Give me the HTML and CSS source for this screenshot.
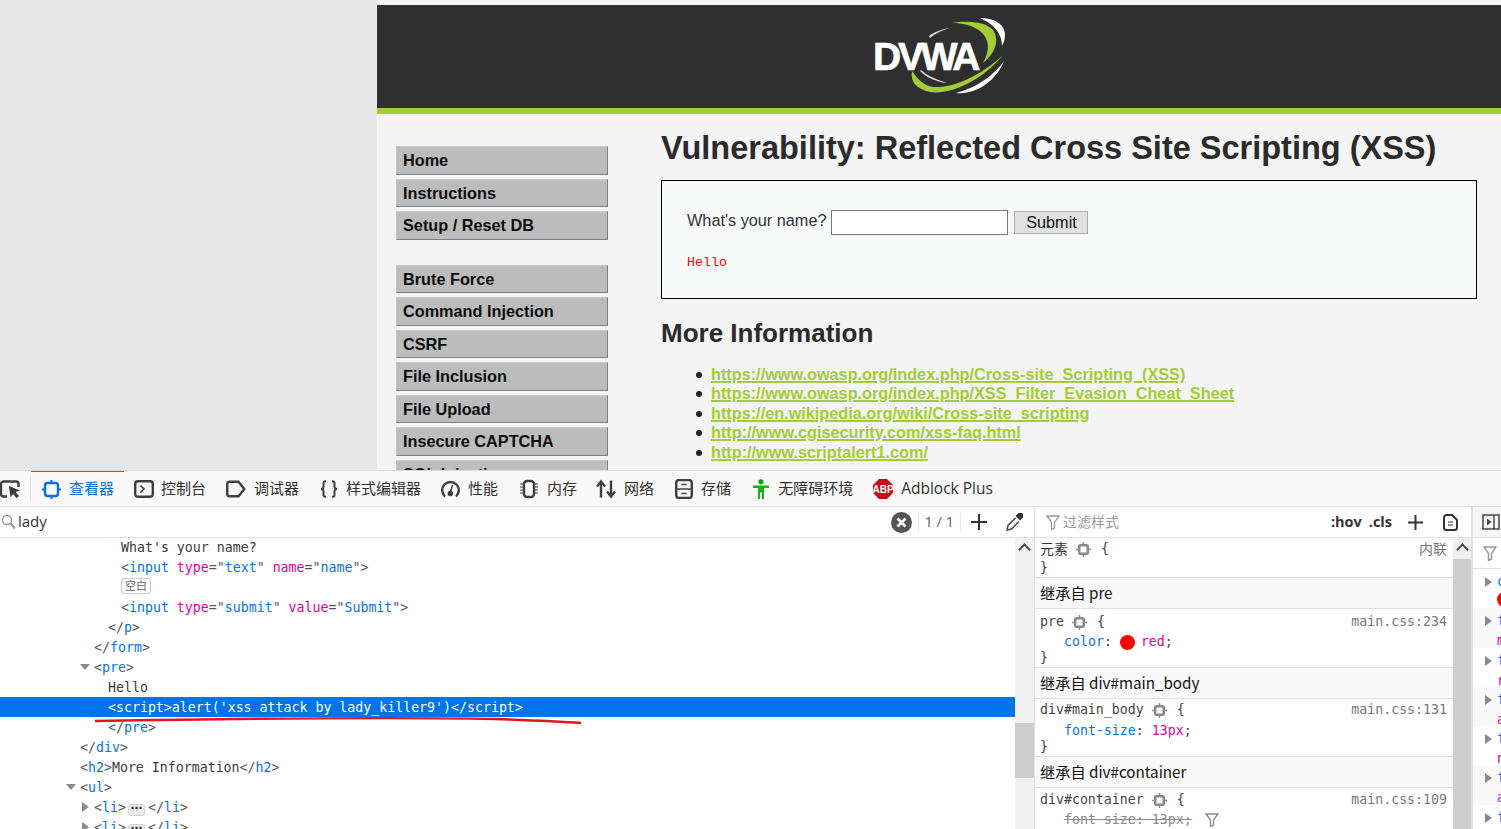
FILE: index.html
```html
<!DOCTYPE html>
<html lang="zh-CN">
<head>
<meta charset="utf-8">
<title>DVWA Reflected XSS</title>
<link rel="stylesheet" href="styles.css">
</head>
<body>
<div class="viewport">
  <div class="gutter"></div>
  <div class="site">
    <div class="header">
      <svg class="logo" viewBox="0 0 140 80" width="140" height="80">
        <path d="M82 8 C96 5 116 7 122 14 C129 22 128 36 113 48 C120 36 120 24 110 16 C102 10 92 8 82 8Z" fill="#a2cd34"/>
        <path d="M110 3 C124 3 135 9 135 20 C135 24 134 27 132 31 C132 20 126 10 110 3Z" fill="#fff"/>
        <path d="M42 56 C40 66 46 74 60 77 C80 80 112 66 133 40 C116 56 92 70 70 72 C58 73 50 68 42 56Z" fill="#a2cd34"/>
        <path d="M86 78 C106 80 126 66 134 46 C124 60 108 72 86 78Z" fill="#fff"/>
        <path d="M60 23 C66 18 72 15 80 13 C72 14 64 17 59 21Z" fill="#ddd"/>
        <path d="M50 56 C56 62 66 67 77 68 C66 64 57 61 51 55Z" fill="#ddd"/>
        <text x="3" y="55" class="logo-text">DVWA</text>
      </svg>
    </div>
    <div class="green-bar"></div>
    <div class="site-body">
      <nav class="menu">
        <div class="menu-group">
          <a class="menu-item">Home</a>
          <a class="menu-item">Instructions</a>
          <a class="menu-item">Setup / Reset DB</a>
        </div>
        <div class="menu-group">
          <a class="menu-item">Brute Force</a>
          <a class="menu-item">Command Injection</a>
          <a class="menu-item">CSRF</a>
          <a class="menu-item">File Inclusion</a>
          <a class="menu-item">File Upload</a>
          <a class="menu-item">Insecure CAPTCHA</a>
          <a class="menu-item">SQL Injection</a>
        </div>
      </nav>
      <main class="content">
        <h1 class="title">Vulnerability: Reflected Cross Site Scripting (XSS)</h1>
        <div class="vuln-box">
          <div class="form-row">
            <span class="prompt">What's your name?</span>
            <span class="text-input"></span>
            <span class="submit">Submit</span>
          </div>
          <pre class="hello">Hello</pre>
        </div>
        <h2 class="subtitle">More Information</h2>
        <ul class="links">
          <li><a>https://www.owasp.org/index.php/Cross-site_Scripting_(XSS)</a></li>
          <li><a>https://www.owasp.org/index.php/XSS_Filter_Evasion_Cheat_Sheet</a></li>
          <li><a>https://en.wikipedia.org/wiki/Cross-site_scripting</a></li>
          <li><a>http://www.cgisecurity.com/xss-faq.html</a></li>
          <li><a>http://www.scriptalert1.com/</a></li>
        </ul>
      </main>
    </div>
  </div>
</div>

<div class="devtools">
  <div class="tabs">
    <span class="pick">
      <svg width="22" height="20" viewBox="0 0 22 20"><path d="M7 17.500H3.500A2.500 2.500 0 0 1 1 15V5a2.500 2.500 0 0 1 2.500-2.500H16A2.500 2.500 0 0 1 18.500 5v3" class="ic"/><path d="M9 7l11 4.500-4.500 1.500 3.500 4-2.500 2-3.500-4-2.500 3.500z" fill="#3b3b3b"/></svg>
    </span>
    <span class="tab active">
      <svg width="19" height="19" viewBox="0 0 19 19"><rect x="3" y="3" width="13" height="13" rx="2.500" fill="none" stroke="#0b6fe0" stroke-width="2.400"/><path d="M9.500 0v3M9.500 16v3M0 9.500h3M16 9.500h3" stroke="#0b6fe0" stroke-width="2"/></svg>
      <span class="tab-label">查看器</span>
    </span>
    <span class="tab tight">
      <svg width="20" height="18" viewBox="0 0 20 18"><rect x="1.200" y="1.200" width="17.600" height="15.600" rx="2.800" class="ic"/><path d="M6.500 5.500L10 9l-3.500 3.500" class="ic-thin"/></svg>
      <span class="tab-label">控制台</span>
    </span>
    <span class="tab wide">
      <svg width="20" height="18" viewBox="0 0 20 18"><path d="M3.500 1.800h9L18.300 9l-5.800 7.200h-9A2.300 2.300 0 0 1 1.200 14V4a2.300 2.300 0 0 1 2.300-2.200z" class="ic"/></svg>
      <span class="tab-label">调试器</span>
    </span>
    <span class="tab">
      <svg width="18" height="18" viewBox="0 0 18 18"><path d="M6 1.200C3 1.200 3.500 3 3.500 5v1.500C3.500 8 2.500 9 1 9c1.500 0 2.500 1 2.500 2.500V13c0 2-.5 3.800 2.500 3.800M12 1.200c3 0 2.500 1.800 2.500 3.800v1.500C14.500 8 15.500 9 17 9c-1.500 0-2.500 1-2.500 2.500V13c0 2 .5 3.800-2.500 3.800" class="ic-mid"/></svg>
      <span class="tab-label">样式编辑器</span>
    </span>
    <span class="tab wide">
      <svg width="19" height="18" viewBox="0 0 19 18"><path d="M4 16.500A8.300 8.300 0 1 1 15 16.500" class="ic"/><path d="M11.500 5L9.500 12" class="ic-thin"/><circle cx="9.300" cy="13.500" r="2.700" fill="#3b3b3b"/></svg>
      <span class="tab-label">性能</span>
    </span>
    <span class="tab narrow">
      <svg width="20" height="20" viewBox="0 0 20 20"><rect x="5" y="2" width="10" height="16" rx="3" class="ic"/><path d="M1 5h3M1 8h3M1 11h3M1 14h3M16 5h3M16 8h3M16 11h3M16 14h3" stroke="#3b3b3b" stroke-width="1.200"/></svg>
      <span class="tab-label">内存</span>
    </span>
    <span class="tab wide">
      <svg width="20" height="20" viewBox="0 0 20 20"><path d="M5 18.500V3M1 7.500L5 2.500l4 5M15 1.500V17M11 12.500l4 5 4-5" class="ic"/></svg>
      <span class="tab-label">网络</span>
    </span>
    <span class="tab wide">
      <svg width="18" height="20" viewBox="0 0 18 20"><rect x="1.200" y="1" width="15.600" height="18" rx="2.800" class="ic"/><path d="M1.500 10h15M6.500 5.500h5M6.500 14.500h5" class="ic-thin"/></svg>
      <span class="tab-label">存储</span>
    </span>
    <span class="tab">
      <svg width="18" height="20" viewBox="0 0 18 20"><circle cx="9" cy="2.800" r="2.600" fill="#12a012"/><path d="M1 6.500h16v2.500h-5v11h-2v-6.500H8V20H6V9H1z" fill="#12b312"/></svg>
      <span class="tab-label">无障碍环境</span>
    </span>
    <span class="tab abp">
      <svg width="20" height="20" viewBox="0 0 20 20"><path d="M6 0h8l6 6v8l-6 6H6l-6-6V6z" fill="#c70d0d"/><text x="10" y="13.800" class="abp-text">ABP</text></svg>
      <span class="abp-label">Adblock Plus</span>
    </span>
  </div>

  <div class="panes">
    <div class="inspector">
      <div class="search-bar">
        <svg width="15" height="16" viewBox="0 0 15 16"><circle cx="6" cy="6" r="4.500" fill="none" stroke="#9a9a9a" stroke-width="1.500"/><path d="M9.500 9.500L14 14.500" stroke="#9a9a9a" stroke-width="2"/></svg>
        <span class="search-text">lady</span>
        <span class="search-spacer"></span>
        <svg width="21" height="21" viewBox="0 0 21 21"><circle cx="10.500" cy="10.500" r="10.500" fill="#555"/><path d="M6.500 6.500l8 8M14.500 6.500l-8 8" stroke="#fff" stroke-width="2.600"/></svg>
        <span class="count">1 / 1</span>
        <svg class="plus" width="16" height="16" viewBox="0 0 16 16"><path d="M8 0v16M0 8h16" stroke="#333" stroke-width="2"/></svg>
        <svg class="dropper" width="17" height="18" viewBox="0 0 17 18"><path d="M12 0.500a2.500 2.500 0 0 1 4.500 4.500L14 7.500 9.500 3z" fill="#333"/><path d="M9.500 5L2 12.500 1 17l4.500-1L13 8.500" fill="none" stroke="#444" stroke-width="1.500"/></svg>
      </div>
      <div class="markup-wrap">
        <div class="markup">
          <div class="line i3 first"><span class="tx">What's your name?</span></div>
          <div class="line i3"><span class="pn">&lt;</span><span class="tg">input</span> <span class="at">type</span><span class="pn">="</span><span class="tg">text</span><span class="pn">"</span> <span class="at">name</span><span class="pn">="</span><span class="tg">name</span><span class="pn">"&gt;</span></div>
          <div class="line i3"><span class="empty">空白</span></div>
          <div class="line i3"><span class="pn">&lt;</span><span class="tg">input</span> <span class="at">type</span><span class="pn">="</span><span class="tg">submit</span><span class="pn">"</span> <span class="at">value</span><span class="pn">="</span><span class="tg">Submit</span><span class="pn">"&gt;</span></div>
          <div class="line i2b"><span class="pn">&lt;/</span><span class="tg">p</span><span class="pn">&gt;</span></div>
          <div class="line i2"><span class="pn">&lt;/</span><span class="tg">form</span><span class="pn">&gt;</span></div>
          <div class="line i2"><i class="tw open"></i><span class="pn">&lt;</span><span class="tg">pre</span><span class="pn">&gt;</span></div>
          <div class="line i2b"><span class="tx">Hello</span></div>
          <div class="line i2b selected">&lt;script&gt;alert('xss attack by lady_killer9')&lt;/script&gt;</div>
          <div class="line i2b"><span class="pn">&lt;/</span><span class="tg">pre</span><span class="pn">&gt;</span></div>
          <div class="line i1"><span class="pn">&lt;/</span><span class="tg">div</span><span class="pn">&gt;</span></div>
          <div class="line i1"><span class="pn">&lt;</span><span class="tg">h2</span><span class="pn">&gt;</span><span class="tx">More Information</span><span class="pn">&lt;/</span><span class="tg">h2</span><span class="pn">&gt;</span></div>
          <div class="line i1"><i class="tw open"></i><span class="pn">&lt;</span><span class="tg">ul</span><span class="pn">&gt;</span></div>
          <div class="line i2"><i class="tw shut"></i><span class="pn">&lt;</span><span class="tg">li</span><span class="pn">&gt;</span><span class="dots">⋯</span><span class="pn">&lt;/</span><span class="tg">li</span><span class="pn">&gt;</span></div>
          <div class="line i2"><i class="tw shut"></i><span class="pn">&lt;</span><span class="tg">li</span><span class="pn">&gt;</span><span class="dots">⋯</span><span class="pn">&lt;/</span><span class="tg">li</span><span class="pn">&gt;</span></div>
          <svg class="scribble" width="490" height="10" viewBox="0 0 490 10"><path d="M0 6C120 4 300 2 400 4 430 5 460 6 486 8" fill="none" stroke="#e8121f" stroke-width="2.400"/></svg>
        </div>
        <div class="scrollbar sb-markup"><span class="sb-up"></span><span class="sb-thumb"></span></div>
      </div>
    </div>

    <div class="rules">
      <div class="rules-bar">
        <svg width="14" height="15" viewBox="0 0 14 15"><path d="M1 1h12L8.500 7.500V13L5.500 14.500v-7z" fill="none" stroke="#999" stroke-width="1.300"/></svg>
        <span class="filter-text">过滤样式</span>
        <span class="search-spacer"></span>
        <b class="pill">:hov</b>
        <b class="pill">.cls</b>
        <svg class="add-rule" width="15" height="15" viewBox="0 0 15 15"><path d="M7.500 0v15M0 7.500h15" stroke="#333" stroke-width="2"/></svg>
        <svg width="15" height="17" viewBox="0 0 15 17"><path d="M3.500 1H9l5 5v7.500a2.500 2.500 0 0 1-2.500 2.500h-8A2.500 2.500 0 0 1 1 13.500v-10A2.500 2.500 0 0 1 3.500 1z" fill="none" stroke="#333" stroke-width="2"/><path d="M5 8h5M5 11h5" stroke="#333" stroke-width="1.200"/></svg>
      </div>
      <div class="rules-wrap">
        <div class="rules-list">
          <div class="rule rule-el">
            <div class="r-line"><span class="sel-cn">元素</span><svg class="target" viewBox="0 0 15 15" width="15" height="15"><rect x="3.200" y="3.200" width="8.600" height="8.600" rx="1.500" class="tg-box"/><path d="M7.500 0v2.500M7.500 12.500V15M0 7.500h2.500M12.500 7.500H15" class="tg-tick"/></svg><span class="br">{</span><span class="src cn">内联</span></div>
            <div class="r-line r-last"><span class="br">}</span></div>
          </div>
          <div class="inherit">继承自 pre</div>
          <div class="rule rule-pre">
            <div class="r-line r-down"><span class="sel">pre</span><svg class="target" viewBox="0 0 15 15" width="15" height="15"><rect x="3.200" y="3.200" width="8.600" height="8.600" rx="1.500" class="tg-box"/><path d="M7.500 0v2.500M7.500 12.500V15M0 7.500h2.500M12.500 7.500H15" class="tg-tick"/></svg><span class="br">{</span><span class="src">main.css:234</span></div>
            <div class="r-line decl"><span class="pr">color</span><span class="colon">:</span><i class="swatch"></i><span class="vl">red</span><span>;</span></div>
            <div class="r-line r-close"><span class="br">}</span></div>
          </div>
          <div class="inherit">继承自 div#main_body</div>
          <div class="rule">
            <div class="r-line"><span class="sel">div#main_body</span><svg class="target" viewBox="0 0 15 15" width="15" height="15"><rect x="3.200" y="3.200" width="8.600" height="8.600" rx="1.500" class="tg-box"/><path d="M7.500 0v2.500M7.500 12.500V15M0 7.500h2.500M12.500 7.500H15" class="tg-tick"/></svg><span class="br">{</span><span class="src">main.css:131</span></div>
            <div class="r-line decl"><span class="pr">font-size</span><span class="colon sp">:</span><span class="vl">13px</span><span>;</span></div>
            <div class="r-line r-close"><span class="br">}</span></div>
          </div>
          <div class="inherit">继承自 div#container</div>
          <div class="rule">
            <div class="r-line r-down"><span class="sel">div#container</span><svg class="target" viewBox="0 0 15 15" width="15" height="15"><rect x="3.200" y="3.200" width="8.600" height="8.600" rx="1.500" class="tg-box"/><path d="M7.500 0v2.500M7.500 12.500V15M0 7.500h2.500M12.500 7.500H15" class="tg-tick"/></svg><span class="br">{</span><span class="src">main.css:109</span></div>
            <div class="r-line decl"><span class="struck">font-size: 13px;</span><svg class="ov-filter" width="14" height="14" viewBox="0 0 14 14"><path d="M1 1h12L8.500 7v5L5.500 13.500V7z" fill="none" stroke="#8a8a8a" stroke-width="1.300"/></svg></div>
          </div>
        </div>
        <div class="scrollbar sb-rules"><span class="sb-up"></span><span class="sb-fill"></span></div>
      </div>
    </div>

    <div class="side">
      <div class="side-top">
        <svg width="18" height="16" viewBox="0 0 18 16"><rect x="1" y="1" width="16" height="14" fill="none" stroke="#444" stroke-width="1.500"/><path d="M12 1v14" stroke="#444" stroke-width="1.500"/><path d="M5 4.500L9.500 8 5 11.500z" fill="#444"/></svg>
      </div>
      <div class="side-filter">
        <svg width="14" height="15" viewBox="0 0 14 15"><path d="M1 1h12L8.500 7.500V13L5.500 14.500v-7z" fill="none" stroke="#999" stroke-width="1.500"/></svg>
      </div>
      <div class="side-list">
        <div class="s-item"><i class="tw shut"></i><span class="s-name">c</span><i class="s-dot"></i></div>
        <div class="s-item odd"><i class="tw shut"></i><span class="s-name">f</span><span class="s-val">m</span></div>
        <div class="s-item"><i class="tw shut"></i><span class="s-name">f</span><span class="s-val">r</span></div>
        <div class="s-item odd"><i class="tw shut"></i><span class="s-name">f</span><span class="s-val">a</span></div>
        <div class="s-item"><i class="tw shut"></i><span class="s-name">f</span><span class="s-val">n</span></div>
        <div class="s-item odd"><i class="tw shut"></i><span class="s-name">f</span><span class="s-val">a</span></div>
        <div class="s-item"><i class="tw shut"></i><span class="s-name">f</span></div>
      </div>
    </div>
  </div>
</div>
</body>
</html>
```

FILE: styles.css
```css
* { box-sizing: border-box; }
html, body { margin: 0; padding: 0; width: 1501px; height: 829px; overflow: hidden; background: #fff; }
body { font-family: "Liberation Sans", Arial, sans-serif; }

.viewport { display: flex; height: 470px; overflow: hidden; background: #e7e7e7; }
.gutter { width: 377px; flex: none; }
.site { flex: 1; padding-top: 5px; background: #f4f4f4; display: flex; flex-direction: column; }
.header { height: 103px; background: #2f2f2f; display: flex; justify-content: center; padding: 10px 0 0 1px; flex: none; }
.logo { display: block; }
.logo-text { font: bold 39px "Liberation Sans", sans-serif; letter-spacing: -3.200px; fill: #fff; stroke: #fff; stroke-width: .6px; }
.green-bar { height: 6px; background: #a2cd34; flex: none; }
.site-body { display: flex; flex: 1; background: #f4f4f4; min-height: 0; }

.menu { width: 231px; flex: none; padding: 32px 0 0 19px; }
.menu-group { display: flex; flex-direction: column; gap: 4px; margin-bottom: 25px; width: 212px; }
.menu-item { display: block; height: 28.500px; flex: none; background: #bcbcbc; border-top: 1px solid #c8c8c8; border-left: 1px solid #c4c4c4; border-right: 1px solid #76808c; border-bottom: 1px solid #76808c; padding-left: 6px; font-weight: bold; font-size: 16.250px; line-height: 27px; color: #0c0c0c; }

.content { flex: 1; padding: 13px 24px 0 53px; min-width: 0; }
.title { margin: 0; font-size: 32.500px; line-height: 42px; font-weight: bold; color: #2b2b2b; white-space: nowrap; }
.vuln-box { margin-top: 11px; height: 119px; border: 1px solid #000; background: #f8f9f9; padding: 25px 0 0 25px; }
.form-row { display: flex; align-items: center; font-size: 16.250px; color: #222; height: 32px; }
.prompt { margin-bottom: 4px; color: #333; }
.text-input { width: 177px; height: 25px; margin-left: 5px; background: #fff; border: 1px solid #777; }
.submit { width: 74px; height: 23px; margin-left: 6px; background: #e1e1e1; border: 1px solid #adadad; text-align: center; line-height: 21px; color: #111; }
.hello { margin: 15px 0 0; font: 13.330px/20px "Liberation Mono", monospace; color: #f00; }
.subtitle { margin: 19px 0 0; font-size: 26px; line-height: 30px; color: #2b2b2b; }
.links { margin: 17px 0 0; padding: 0 0 0 50px; font-size: 16.250px; line-height: 19.400px; font-weight: bold; list-style: none; }
.links li { position: relative; }
.links li::before { content: ""; position: absolute; left: -15px; top: 7px; width: 6px; height: 6px; border-radius: 50%; background: #222; }
.links a { color: #a2cd34; text-decoration: underline; text-decoration-thickness: 2px; }

.devtools { height: 359px; background: #fff; display: flex; flex-direction: column; font-family: "Noto Sans CJK SC", "Noto Sans", sans-serif; color: #333; overflow: hidden; border-top: 1px solid #dadada; }
.tabs { height: 36px; flex: none; display: flex; background: #f9f9f9; border-bottom: 1px solid #e0e0e0; font-size: 15px; }
.pick { width: 31px; flex: none; display: flex; align-items: center; border-right: 1px solid #e4e4e4; margin: 5px 0; }
.ic { fill: none; stroke: #3f3f3f; stroke-width: 2.400; }
.ic-mid { fill: none; stroke: #3f3f3f; stroke-width: 2; }
.ic-thin { fill: none; stroke: #3f3f3f; stroke-width: 1.500; }
.tab { display: flex; align-items: center; gap: 8px; padding: 0 10px; flex: none; white-space: nowrap; color: #303030; position: relative; }
.tab.tight { gap: 7px; }
.tab.wide { padding-right: 11px; }
.tab.narrow { padding-right: 9px; }
.tab-label { margin-top: -3px; }
.tab.active { color: #0b6fe0; border-top: 2px solid #0a84ff; margin-top: -1px; padding-left: 11px; }
.abp-label { font-family: "Open Sans", sans-serif; font-size: 15.500px; margin-top: -2px; }
.abp-text { font: bold 10px "Liberation Sans", sans-serif; fill: #fff; text-anchor: middle; }

.panes { flex: 1; display: flex; min-height: 0; }
.inspector { width: 1035px; flex: none; display: flex; flex-direction: column; border-right: 1px solid #e0e0e0; }
.search-bar { height: 31px; flex: none; display: flex; align-items: center; border-bottom: 1px solid #e0e0e0; padding-right: 11px; font-family: "Open Sans", sans-serif; font-size: 15px; }
.search-bar > svg:first-child { margin-left: 1px; margin-right: 2px; }
.search-text { color: #333; margin-top: -2px; }
.search-spacer { flex: 1; }
.count { color: #5a6470; font-size: 14.500px; margin-left: 6px; padding: 0 6px; border-left: 1px solid #e6e6e6; border-right: 1px solid #e6e6e6; height: 18px; line-height: 17px; }
.plus { margin-left: 10px; }
.dropper { margin-left: 19px; }

.markup-wrap { flex: 1; display: flex; min-height: 0; }
.markup { flex: 1; position: relative; font: 13.250px/20px "DejaVu Sans Mono", monospace; overflow: hidden; }
.line { height: 20px; line-height: 22px; position: relative; color: #3a3a3a; white-space: pre; }
.first { margin-top: -1px; }
.i1 { padding-left: 80px; }
.i2 { padding-left: 94px; }
.i2b { padding-left: 108px; }
.i3 { padding-left: 121px; }
.tx { color: #3a3a3a; }
.pn { color: #555; }
.tg { color: #0074e8; }
.at { color: #dd00a9; }
.selected { background: #0074e8; color: #fff; }
.empty { display: inline-block; font: 11px/13px "Noto Sans CJK SC", sans-serif; border: 1px solid #c8c8c8; border-radius: 3px; padding: 0 3px; color: #666; height: 16px; vertical-align: 2px; }
.dots { display: inline-block; width: 17px; height: 12px; background: #eee; border: 1px solid #cfcfcf; border-radius: 3px; font: bold 12px/7px "DejaVu Sans", sans-serif; text-align: center; margin: 0 3px 0 2px; color: #333; }
.tw { position: absolute; width: 0; height: 0; border-style: solid; }
.tw.open { border-width: 6px 5px 0 5px; border-color: #8a8a8a transparent transparent; margin-left: -14px; top: 7px; }
.tw.shut { border-width: 5px 0 5px 7px; border-color: transparent transparent transparent #8a8a8a; margin-left: -12px; top: 5px; }
.scribble { position: absolute; left: 95px; top: 177px; }

.scrollbar { width: 19px; flex: none; background: #f0f0f0; display: flex; flex-direction: column; position: relative; }
.sb-up { height: 21px; flex: none; position: relative; }
.sb-up::before { content: ""; position: absolute; left: 5px; top: 7px; width: 7px; height: 7px; border-left: 2px solid #4a4a4a; border-top: 2px solid #4a4a4a; transform: rotate(45deg); }
.sb-thumb { position: absolute; left: 0; right: 0; top: 185px; height: 55px; background: #cdcdcd; }
.sb-fill { flex: 1; background: #cdcdcd; }

.rules { width: 438px; flex: none; display: flex; flex-direction: column; border-right: 2px solid #e0e0e0; }
.rules-bar { height: 31px; flex: none; display: flex; align-items: center; border-bottom: 1px solid #e0e0e0; padding: 0 13px 0 11px; font-size: 14px; }
.filter-text { color: #999; margin-left: 3px; margin-top: -2px; }
.pill { font: bold 14.500px "Open Sans", sans-serif; color: #333; margin-right: 7px; margin-top: -1px; }
.pill + .pill { margin-right: 9px; }
.add-rule { margin: 0 20px 0 7px; }

.rules-wrap { flex: 1; display: flex; min-height: 0; }
.rules-list { flex: 1; overflow: hidden; min-width: 0; font: 13.250px/20px "DejaVu Sans Mono", "Noto Sans CJK SC", monospace; color: #444; }
.rule { padding: 1px 6px 0 5px; border-bottom: 1px solid #e0e0e0; }
.rule-pre { padding-top: 2px; }
.r-line { height: 20px; display: flex; align-items: center; white-space: pre; }
.r-down { padding-top: 2px; }
.r-last { height: 18px; }
.r-close { height: 13px; margin-bottom: 3px; }
.sel { color: #444; }
.sel-cn { font: 14px "Noto Sans CJK SC", sans-serif; color: #333; margin-top: -2px; }
.br { color: #444; }
.src { margin-left: auto; color: #777; }
.src.cn { font: 14px "Noto Sans CJK SC", sans-serif; color: #777; margin-top: -2px; }
.target { margin: 0 10px 0 8px; flex: none; display: block; }
.tg-box { fill: none; stroke: #8a8a8a; stroke-width: 2.600; }
.tg-tick { stroke: #8a8a8a; stroke-width: 1.500; }
.decl { padding-left: 24px; padding-top: 2px; }
.pr { color: #0074e8; }
.vl { color: #dd00a9; }
.colon.sp { margin-right: 8px; }
.swatch { width: 15px; height: 15px; border-radius: 50%; background: #f00; margin: 0 6px 0 8px; flex: none; }
.struck { color: #8a8a8a; text-decoration: line-through; }
.ov-filter { margin-left: 13px; }
.inherit { height: 31px; padding-left: 5px; background: #f9f9f9; border-bottom: 1px solid #e0e0e0; font: 15.200px/29px "Noto Sans CJK SC", "Open Sans", sans-serif; color: #111; }
.sb-rules { width: 18px; }

.side { flex: 1; display: flex; flex-direction: column; min-width: 0; overflow: hidden; background: #fff; }
.side-top { height: 31px; flex: none; background: #f5f5f5; border-bottom: 1px solid #e0e0e0; padding: 7px 0 0 9px; }
.side-top svg, .side-filter svg { display: block; }
.side-filter { height: 31px; flex: none; border-bottom: 1px solid #e0e0e0; padding: 8px 0 0 10px; }
.side-list { font: 13.250px/20px "DejaVu Sans Mono", monospace; }
.s-item { height: 39.300px; position: relative; padding: 3px 0 0 24px; white-space: nowrap; }
.s-item.odd { background: #f9f9f9; }
.s-item .tw { margin: 0; left: 12px; top: 8px; }
.s-name { display: block; color: #0074e8; height: 20px; }
.s-val { display: block; color: #dd00a9; height: 19px; }
.s-dot { display: block; width: 15px; height: 15px; border-radius: 50%; background: #f00; }
```
